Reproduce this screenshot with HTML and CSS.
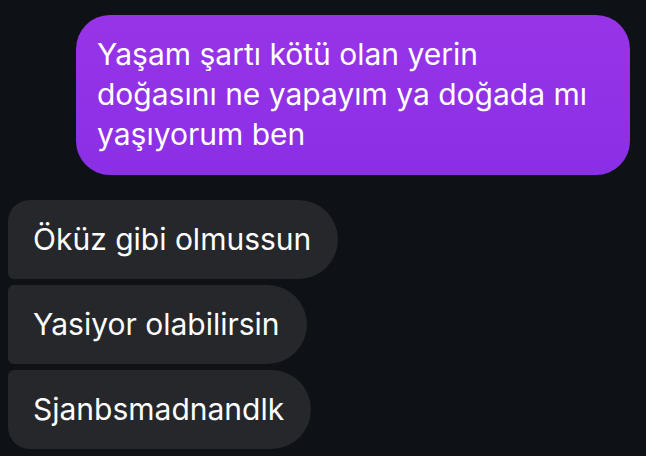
FILE: index.html
```html
<!DOCTYPE html>
<html lang="tr">
<head>
	<meta charset="utf-8"/>
	<title>Sohbet</title>
	<link rel="stylesheet" href="styles.css">
</head>
<body>
	<div class="chat">
		<div class="row row-out">
			<div class="bubble bubble-out">Yaşam şartı kötü olan yerin doğasını ne yapayım ya doğada mı yaşıyorum ben</div>
		</div>
		<div class="group-in">
			<div class="row"><div class="bubble bubble-in first">Öküz gibi olmussun</div></div>
			<div class="row"><div class="bubble bubble-in">Yasiyor olabilirsin</div></div>
			<div class="row"><div class="bubble bubble-in last">Sjanbsmadnandlk</div></div>
		</div>
	</div>
</body>
</html>
```

FILE: styles.css
```css
* {
	box-sizing: border-box;
}
html, body {
	margin: 0;
	background: #0e1115;
}
body {
	font-family: Inter, 'Liberation Sans', Arial, sans-serif;
	color: #fff;
}
.chat {
	padding: 15px 16px 0 8px;
	display: flex;
	flex-direction: column;
	gap: 25px;
}
.row {
	display: flex;
}
.row-out {
	justify-content: flex-end;
}
.bubble {
	font-size: 30px;
	line-height: 40px;
}
.bubble-out {
	width: 554px;
	padding: 19px 28px 21px 21px;
	border-radius: 34px;
	background: linear-gradient(180deg, #9834e8 0%, #8a2fe6 100%);
}
.group-in {
	display: flex;
	flex-direction: column;
	gap: 6px;
}
.bubble-in {
	background: #25272b;
	padding: 19px 27px 20px 25px;
	border-radius: 6px 40px 40px 6px;
}
.bubble-in.first {
	border-top-left-radius: 22px;
}
.bubble-in.last {
	border-bottom-left-radius: 22px;
}
```
